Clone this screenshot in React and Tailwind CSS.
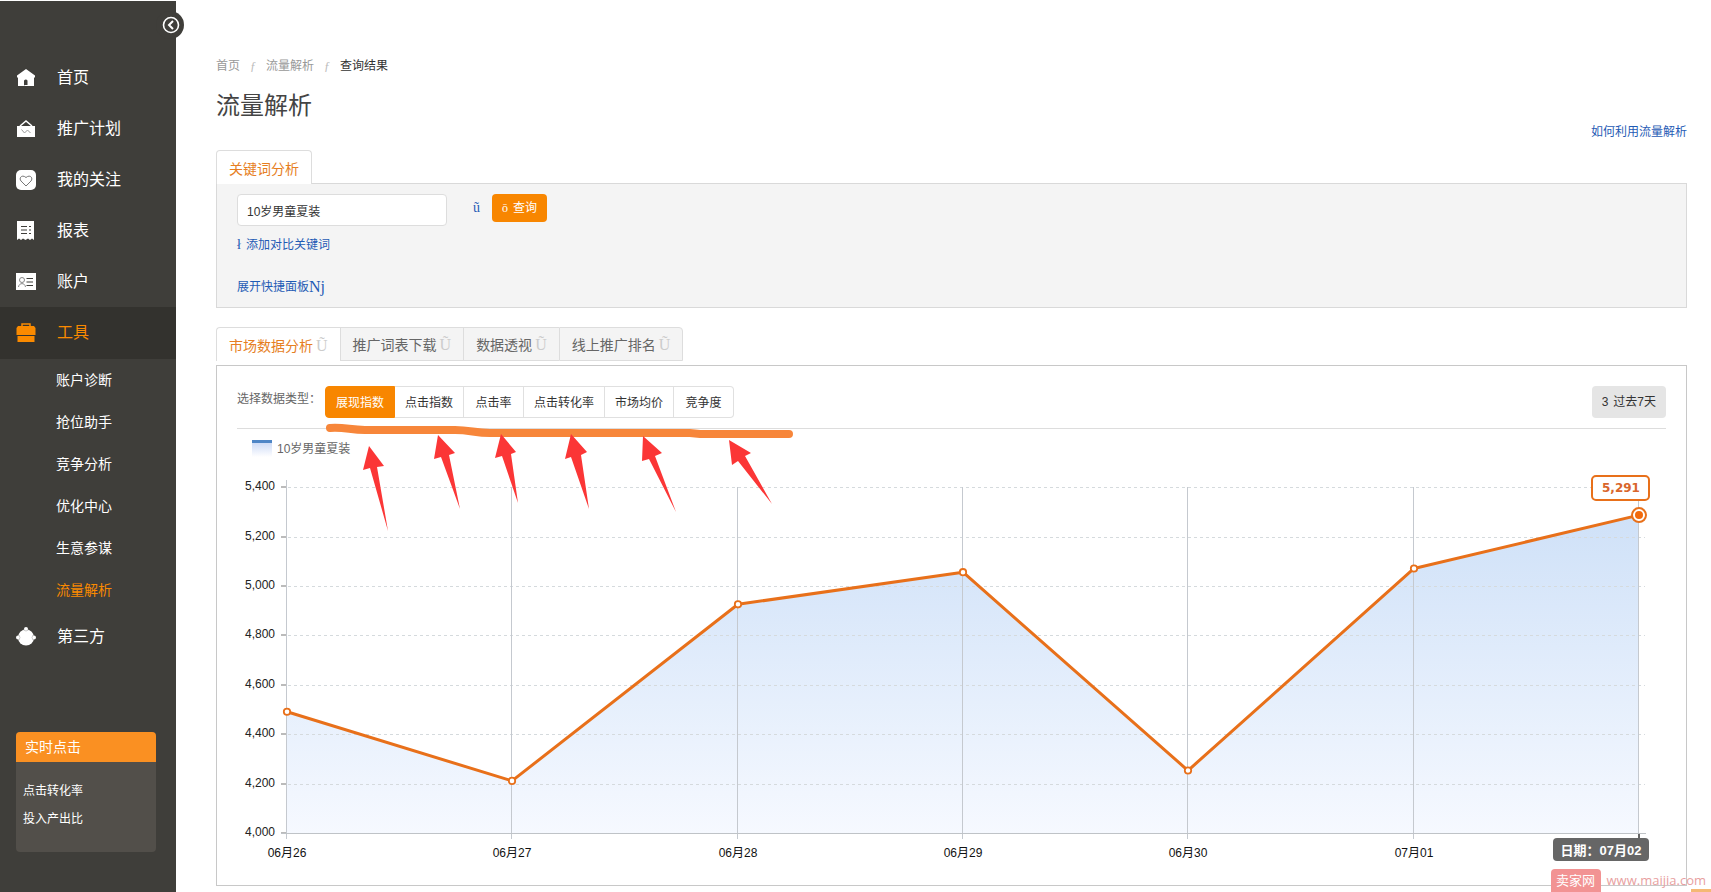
import { useState } from 'react';

const mainNav = [
  { label: '首页', icon: 'home' },
  { label: '推广计划', icon: 'plan' },
  { label: '我的关注', icon: 'heart' },
  { label: '报表', icon: 'report' },
  { label: '账户', icon: 'account' },
  { label: '工具', icon: 'tools', active: true },
];

const toolNav = ['账户诊断', '抢位助手', '竞争分析', '优化中心', '生意参谋', '流量解析'];

const tabs = ['市场数据分析', '推广词表下载', '数据透视', '线上推广排名'];

const metrics = ['展现指数', '点击指数', '点击率', '点击转化率', '市场均价', '竞争度'];

const chartData = [
  { date: '06月26', value: 4495 },
  { date: '06月27', value: 4215 },
  { date: '06月28', value: 4930 },
  { date: '06月29', value: 5060 },
  { date: '06月30', value: 4257 },
  { date: '07月01', value: 5075 },
  { date: '07月02', value: 5291 },
];

function NavIcon({ name }) {
  const dark = '#3f3e3a';
  switch (name) {
    case 'home':
      return (
        <svg width="20" height="20" viewBox="0 0 20 20" fill="#fff">
          <path d="M10 1 L19 7.500 V9.500 H18 V18 H2 V9.500 H1 V7.500 Z" />
          <path d="M8 18 V12.500 Q10 10.500 11.500 12.500 V17 H8.500" fill={dark} />
        </svg>
      );
    case 'plan':
      return (
        <svg width="20" height="20" viewBox="0 0 20 20" fill="#fff">
          <path d="M1 7 H19 V18 H1 Z" />
          <path d="M4 7 L10 2 L16 7" fill="none" stroke="#fff" strokeWidth="1.600" />
          <path d="M5.500 10.500 L8.500 14 L11.500 11 L14.500 14" fill="none" stroke="#999" strokeWidth="1" />
        </svg>
      );
    case 'heart':
      return (
        <svg width="20" height="20" viewBox="0 0 20 20">
          <rect width="20" height="20" rx="5" fill="#fff" />
          <path d="M10 16 L5 11 C2.500 8 6 4 10 7.500 C14 4 17.500 8 15 11 Z" fill="none" stroke="#777" strokeWidth="1" />
        </svg>
      );
    case 'report':
      return (
        <svg width="20" height="20" viewBox="0 0 20 20">
          <path d="M1 0 H18 V19 L16 17.500 L14 19 L12 17.500 L9.500 19 L7 17.500 L5 19 L3 17.500 L1 19 Z" fill="#fff" />
          <path d="M5 5.500 H11 M5 9 H11 M5 12.500 H11 M13 5.500 H15 M13 9 H15 M13 12.500 H15" stroke={dark} strokeWidth="1.200" />
        </svg>
      );
    case 'account':
      return (
        <svg width="20" height="20" viewBox="0 0 20 20">
          <rect y="1" width="20" height="17" fill="#fff" />
          <circle cx="6" cy="8" r="2.500" fill="none" stroke="#888" />
          <path d="M2.500 15 C3 10.500 9 10.500 9.500 15" fill="none" stroke="#888" />
          <path d="M10.500 6.500 H17 M10.500 10 H17 M10.500 13.500 H17" stroke={dark} strokeWidth="1.200" />
        </svg>
      );
    case 'tools':
      return (
        <svg width="20" height="20" viewBox="0 0 20 20" fill="#fa8a00">
          <path d="M6 4 V1 H14 V4" fill="none" stroke="#fa8a00" strokeWidth="1.500" />
          <path d="M2 3 H18 L19.500 5 V12 H0.500 V5 Z M1.500 13 H18.500 V19 H1.500 Z" />
        </svg>
      );
    default:
      return (
        <svg width="20" height="20" viewBox="0 0 20 20" fill="#fff">
          <circle cx="10" cy="10.500" r="8" />
          <circle cx="10" cy="2" r="2" />
          <circle cx="2" cy="10.500" r="2" />
          <circle cx="18" cy="10.500" r="2" />
          <path d="M7.500 3 Q10 5 12.500 3 M3 8 Q5 10.500 3 13 M17 8 Q15 10.500 17 13" fill="none" stroke="#bbb" strokeWidth="0.800" />
        </svg>
      );
  }
}

function NavItem({ label, icon, active }) {
  return (
    <a
      href="#"
      className={`flex items-center gap-[21px] pl-4 text-base ${active ? 'h-[52px] bg-[#33322e] text-[#fa8a00]' : 'h-[51px] text-white'}`}
    >
      <NavIcon name={icon} />
      {label}
    </a>
  );
}

function Sidebar() {
  return (
    <aside className="relative w-44 shrink-0 bg-[#3f3e3a] pt-[51px]">
      <button type="button" aria-label="收起菜单" className="absolute top-[10px] -right-2 size-7 rounded-full bg-[#3f3e3a]">
        <svg width="28" height="28" viewBox="0 0 28 28" fill="none" stroke="#fff" strokeWidth="1.600">
          <circle cx="15" cy="14" r="7.500" />
          <path d="M17 10 L13 14 L17 18" strokeWidth="2" />
        </svg>
      </button>
      <nav>
        {mainNav.map((item) => (
          <NavItem key={item.label} {...item} />
        ))}
        {toolNav.map((label) => (
          <a
            key={label}
            href="#"
            className={`flex h-[42px] items-center pl-14 text-sm ${label === '流量解析' ? 'text-[#fa8a00]' : 'text-white'}`}
          >
            {label}
          </a>
        ))}
        <NavItem label="第三方" icon="third" />
      </nav>
      <section className="mx-4 mt-[70px] mr-5 h-[120px] overflow-hidden rounded bg-[#524f4a] text-white">
        <h2 className="flex h-[30px] items-center bg-[#fa9022] pl-[9px] text-sm">实时点击</h2>
        <ul className="pt-[15px] pl-[7px] text-xs leading-7">
          <li>点击转化率</li>
          <li>投入产出比</li>
        </ul>
      </section>
    </aside>
  );
}

function SearchPanel() {
  return (
    <section>
      <div className="flex">
        <button
          type="button"
          className="-mb-px h-[34px] rounded-t border border-b-0 border-[#ddd] bg-white px-3 pt-0.5 text-sm text-[#e67e22]"
        >
          关键词分析
        </button>
      </div>
      <div className="h-[125px] border border-[#d9d9d9] bg-[#f4f4f4] px-5 pt-[10px] text-xs text-[#1f5bb5]">
        <form className="flex items-start" onSubmit={(e) => e.preventDefault()}>
          <input
            aria-label="关键词"
            defaultValue="10岁男童夏装"
            className="h-8 w-[210px] rounded border border-[#ddd] bg-white px-[9px] text-[#333]"
          />
          <button type="button" aria-label="删除" className="ml-[26px] h-7 font-['Liberation_Serif',serif] text-sm">ũ</button>
          <button type="submit" className="ml-3 flex h-7 w-[55px] items-center justify-center gap-[5px] rounded bg-[#f88600] text-white">
            <span className="font-['Liberation_Serif',serif]">ō</span>查询
          </button>
        </form>
        <a href="#" className="mt-[10px] flex h-[18px] items-center gap-[5px]">
          <span className="font-['Liberation_Serif',serif] text-sm">ł</span>添加对比关键词
        </a>
        <a href="#" className="mt-6 flex h-[18px] items-center">
          展开快捷面板<span className="font-['Liberation_Serif',serif] text-base">Nj</span>
        </a>
      </div>
    </section>
  );
}

const px = (i) => 70 + Math.round((i * 1352) / 6);
const py = (v) => 377 - (v - 4000) * 0.247;

function TrendChart() {
  const line = chartData.map((d, i) => `${px(i)},${py(d.value)}`).join(' ');
  const last = chartData.length - 1;
  return (
    <svg viewBox="0 0 1469 428" className="block h-auto w-full" fontSize="12">
      <defs>
        <linearGradient id="area" x1="0" y1="0" x2="0" y2="1">
          <stop offset="0" stopColor="#cfe1f8" />
          <stop offset="1" stopColor="#f6f9ff" />
        </linearGradient>
      </defs>
      <polygon points={`70,377 ${line} ${px(last)},377`} fill="url(#area)" />
      {[0, 1, 2, 3, 4, 5, 6, 7].map((n) => {
        const value = 4000 + n * 200;
        const y = Math.round(py(value)) - 0.5;
        return (
          <g key={value}>
            {n > 0 && <path d={`M71 ${y} H1428`} stroke="#d5dadd" strokeDasharray="3 3" />}
            <rect x="64" y={y - 1.5} width="6" height="2" fill="#bbb" />
            <text x="58" y={y + 2.5} textAnchor="end" fill="#222">{value.toLocaleString('en-US')}</text>
          </g>
        );
      })}
      {chartData.map((d, i) => (
        <path key={d.date} d={`M${px(i) - 0.5} ${i === 0 ? 23 : 30} V382`} stroke="#c5c9cf" />
      ))}
      <path d="M64 376.5 H1429" stroke="#bfc3c7" />
      {chartData.slice(0, last).map((d, i) => (
        <text key={d.date} x={px(i)} y="400" textAnchor="middle" fill="#111">{d.date}</text>
      ))}
      <polyline points={line} fill="none" stroke="#e8701a" strokeWidth="3" strokeLinejoin="round" />
      {chartData.slice(0, last).map((d, i) => (
        <circle key={d.date} cx={px(i)} cy={py(d.value)} r="3.200" fill="#fff" stroke="#e8701a" strokeWidth="1.800" />
      ))}
      <circle cx={px(last)} cy={py(5291)} r="7" fill="#fff" stroke="#e8701a" strokeWidth="2" />
      <circle cx={px(last)} cy={py(5291)} r="4" fill="#f26a0c" />

      <rect x="1375" y="19" width="57" height="24" rx="4" fill="#fff" stroke="#e8701a" strokeWidth="2" />
      <text x="1404" y="35" textAnchor="middle" fontWeight="bold" fill="#d9662b" className="font-['DejaVu_Sans',sans-serif]">5,291</text>

      <rect x="1421" y="377" width="2" height="5" fill="#666" />
      <rect x="1336" y="381" width="96" height="23" rx="4" fill="#666" />
      <text x="1384" y="398" textAnchor="middle" fontSize="13" fontWeight="bold" fill="#fff">日期：07月02</text>
    </svg>
  );
}

// hand-drawn marks pointing at the metric buttons
function Annotations() {
  return (
    <svg className="pointer-events-none absolute top-0 left-0" width="600" height="180" viewBox="217 366 600 180">
      <path d="M330 428 C345 427 350 430 365 430 H455 C470 430 475 433 490 433 H690 L700 434 H789" fill="none" stroke="#f7863a" strokeWidth="8" strokeLinecap="round" />
      <g fill="#fb3636">
        <path d="M369 446 L384 466 L377 467 L388 531 L370 468 L363 470 Z" />
        <path d="M438 435 L455 453 L449 455 L460 509 L441 457 L434 459 Z" />
        <path d="M501 434 L516 452 L511 454 L518 503 L502 456 L495 458 Z" />
        <path d="M571 434 L587 452 L581 455 L589 509 L571 457 L565 459 Z" />
        <path d="M643 436 L662 453 L655 456 L676 512 L649 459 L642 461 Z" />
        <path d="M729 440 L751 453 L745 456 L772 504 L738 461 L732 465 Z" />
      </g>
    </svg>
  );
}

function MarketPanel() {
  const [metric, setMetric] = useState('展现指数');
  return (
    <section className="mt-[19px]">
      <div className="flex h-[34px]">
        {tabs.map((tab, i) => (
          <button
            key={tab}
            type="button"
            className={`flex items-center gap-[3px] border-t border-l border-[#ddd] pt-0.5 pl-3 text-sm ${
              i === 0 ? 'rounded-tl bg-white text-[#e67e22]' : 'border-b bg-[#f4f4f4] text-[#666]'
            } ${i === tabs.length - 1 ? 'rounded-tr border-r pr-3' : 'pr-3'}`}
          >
            {tab}
            <span className="font-['Liberation_Serif',serif] text-base text-[#ccc]">Ũ</span>
          </button>
        ))}
      </div>
      <div className="relative mt-1 border border-[#c8c8c8]">
        <div className="mx-5 flex h-[63px] items-start border-b border-[#ddd] pt-5 text-xs">
          <span className="w-[88px] pt-[5px] text-[#666]">选择数据类型：</span>
          <div className="flex">
            {metrics.map((name) => (
              <button
                key={name}
                type="button"
                onClick={() => setMetric(name)}
                className={`h-8 min-w-[60px] border-y border-r px-[10px] pt-0.5 first:rounded-l first:border-l last:rounded-r ${
                  metric === name ? 'border-[#f88600] bg-[#f88600] text-white' : 'border-[#e0e0e0] bg-white text-[#333]'
                }`}
              >
                {name}
              </button>
            ))}
          </div>
          <button type="button" className="ml-auto flex h-8 items-center gap-[5px] rounded bg-[#e5e5e5] px-[10px] text-[#333]">
            <span>3</span>
            <span>过去7天</span>
          </button>
        </div>
        <div className="flex h-7 items-end gap-[5px] pl-[35px] text-xs text-[#666]">
          <span className="h-[17px] w-5 border-t-3 border-[#4f86c6] bg-linear-to-b from-[#cfdcf6] to-white" />
          10岁男童夏装
        </div>
        <TrendChart />
        <Annotations />
      </div>
    </section>
  );
}

function Watermark() {
  return (
    <div className="absolute right-0 bottom-0 flex items-center gap-[6px] overflow-hidden pr-[5px] text-xs text-[#e8a0a0]">
      <span className="flex h-[23px] w-[50px] items-center justify-center rounded-t-sm bg-[#f29393] text-[13px] text-white">卖家网</span>
      <span className="font-['Open_Sans',sans-serif] text-[13px]">www.maijia.com</span>
      <span className="absolute right-0 bottom-0 h-[3px] w-5 bg-[#f5b873]" />
    </div>
  );
}

export default function App() {
  return (
    <div className="relative flex min-h-screen bg-white pt-px font-['Liberation_Sans','Noto_Sans_CJK_SC',sans-serif]">
      <Sidebar />
      <main className="min-w-0 flex-1 pt-14 pr-6 pb-1 pl-10">
        <nav className="flex h-[18px] items-center text-xs text-[#999]">
          <a href="#">首页</a>
          <span className="w-[26px] text-center font-['Liberation_Serif',serif] text-[#bbb] italic">ƒ</span>
          <a href="#">流量解析</a>
          <span className="w-[26px] text-center font-['Liberation_Serif',serif] text-[#bbb] italic">ƒ</span>
          <span className="text-[#333]">查询结果</span>
        </nav>
        <div className="flex h-[75px] items-start justify-between">
          <h1 className="pt-[15px] text-2xl leading-8 text-[#444]">流量解析</h1>
          <a href="#" className="pt-[49px] text-xs text-[#1f5bb5]">如何利用流量解析</a>
        </div>
        <SearchPanel />
        <MarketPanel />
      </main>
      <Watermark />
    </div>
  );
}
